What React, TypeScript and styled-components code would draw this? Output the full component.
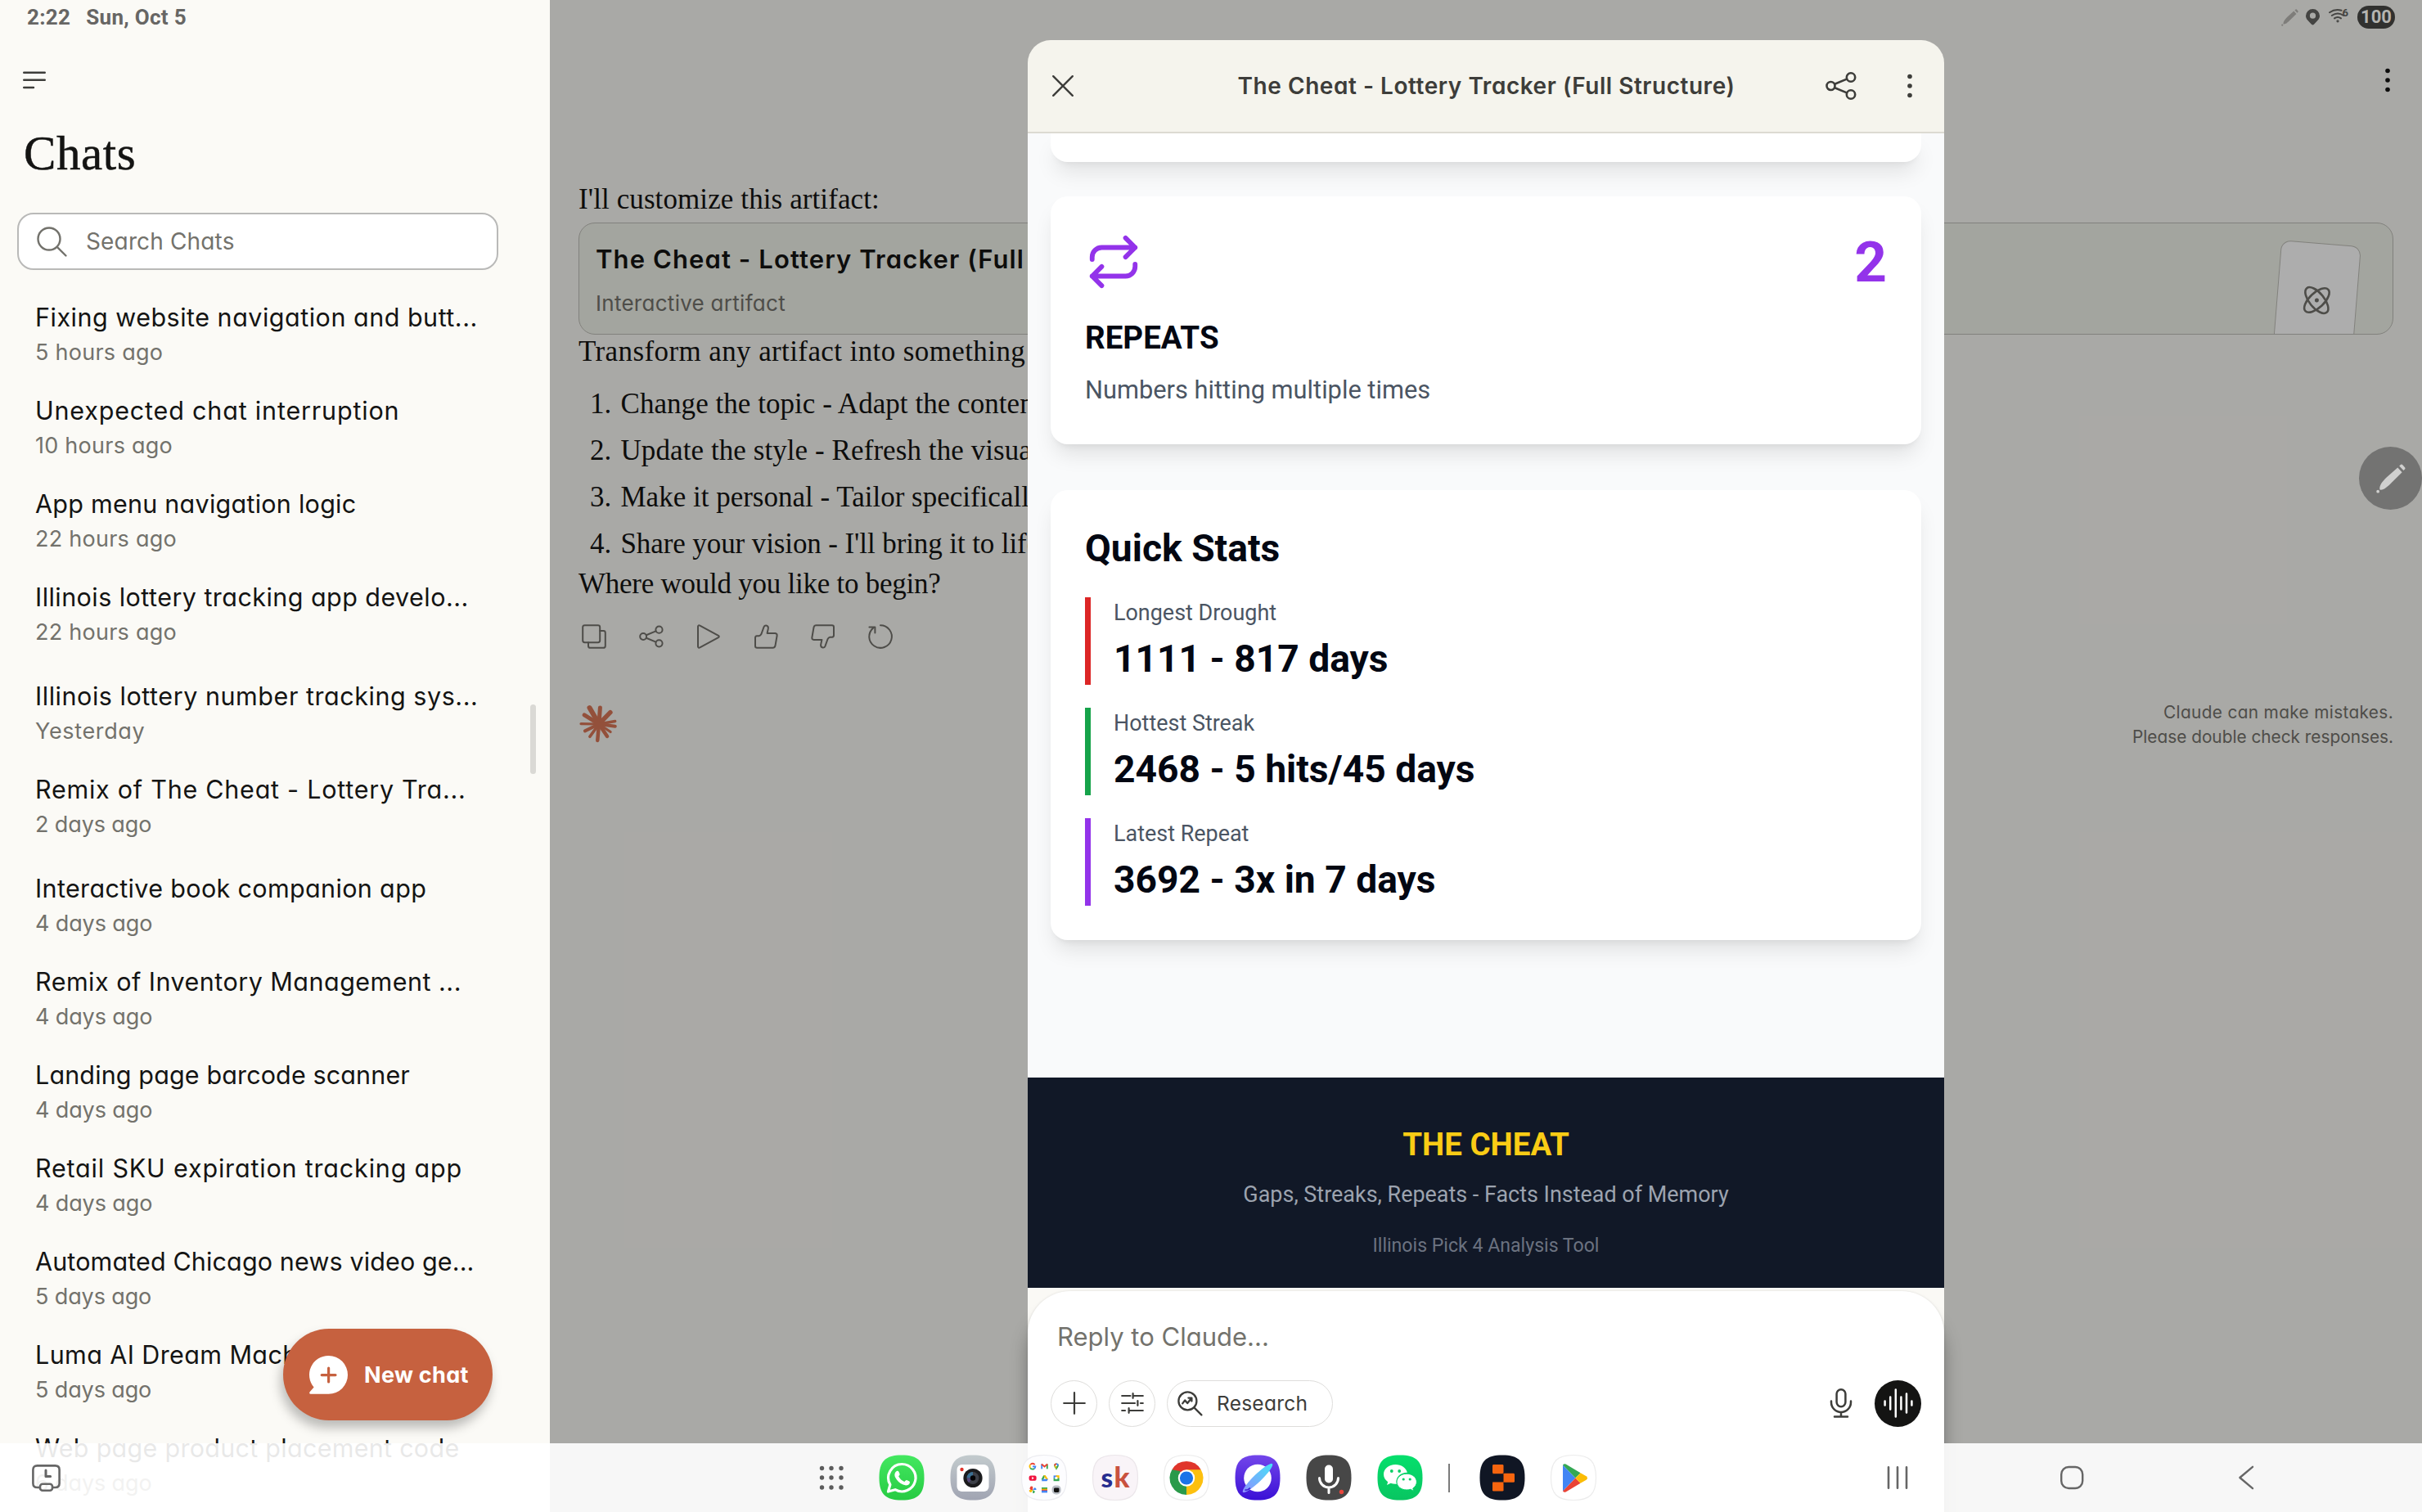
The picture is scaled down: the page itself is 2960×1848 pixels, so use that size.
import React from "react";
import styled, { createGlobalStyle } from "styled-components";

const sans = `Inter, "Liberation Sans", sans-serif`;
const serif = `"Liberation Serif", "Times New Roman", serif`;
const roboto = `Roboto, "Liberation Sans", sans-serif`;

const GlobalStyle = createGlobalStyle`
  * { box-sizing: border-box; }
  body { margin: 0; background: #faf9f5; overflow: hidden; }
  h1, h2, h3, p, ol, ul { margin: 0; padding: 0; font-weight: inherit; font-size: inherit; }
  ol, ul { list-style: none; }
  button { font: inherit; color: inherit; border: 0; background: none; padding: 0; }
  svg { display: block; flex: none; overflow: visible; }
`;

const Screen = styled.div`
  position: relative;
  display: grid;
  grid-template-columns: 672px 1fr;
  width: 2960px;
  height: 1848px;
  overflow: hidden;
  font-family: ${sans};
  font-feature-settings: "cv11";
  color: #141413;
  background: #faf9f5;
`;

/* ---------- system status bar ---------- */

const StatusBar = styled.header`
  position: absolute;
  inset: 0 0 auto 0;
  height: 42px;
  display: flex;
  justify-content: space-between;
  padding: 0 33px 0 33px;
  font-family: ${roboto};
`;

const Clock = styled.div`
  display: flex;
  gap: 19px;
  font-size: 26px;
  font-weight: 700;
  line-height: 42px;
  letter-spacing: 0.3px;
  color: #676664;
`;

const StatusIcons = styled.div`
  display: flex;
  align-items: center;
`;

const PenGlyph = styled.span`margin-right: 9px; color: #7e7d7a;`;
const PinGlyph = styled.svg`margin-right: 11px; color: #444442;`;
const WifiGlyph = styled.svg`margin-top: -4px; color: #444442;`;
const WifiGen = styled.span`
  font-size: 13px;
  font-weight: 700;
  line-height: 13px;
  margin: -12px 11px 0 -5px;
  color: #444442;
`;

const Battery = styled.span`
  width: 46px;
  height: 28px;
  border-radius: 14px;
  background: #31312f;
  color: #b5b4b0;
  font-size: 22px;
  font-weight: 700;
  line-height: 28px;
  text-align: center;
`;

/* ---------- sidebar ---------- */

const Sidebar = styled.aside`
  position: relative;
  display: flex;
  flex-direction: column;
  height: 1848px;
  overflow: hidden;
  background: #fbfaf6;
`;

const MenuButton = styled.button`
  width: 28px;
  margin: 87px 0 0 28px;
  color: #3d3d3a;
`;

const SidebarTitle = styled.h1`
  margin: 46px 0 0 29px;
  font-family: ${serif};
  font-size: 59px;
  line-height: 64px;
  letter-spacing: 0.6px;
  -webkit-text-stroke: 0.5px #141413;
`;

const SearchField = styled.div`
  display: flex;
  align-items: center;
  gap: 23px;
  width: 588px;
  height: 70px;
  flex: none;
  margin: 41px 0 0 21px;
  padding: 0 22px;
  border: 2px solid #b9b9b8;
  border-radius: 20px;
  background: #fff;
  color: #73726c;
  font-size: 28px;
  letter-spacing: 0.15px;
`;

const ChatGroups = styled.div`
  display: flex;
  flex-direction: column;
  gap: 7px;
  margin-top: 38px;
  padding-left: 43px;
`;

const ChatRow = styled.li`
  height: 114px;
`;

const ChatTitle = styled.p<{ $track: number }>`
  font-size: 30.5px;
  line-height: 40px;
  letter-spacing: ${(p) => p.$track}px;
  white-space: nowrap;
`;

const ChatMeta = styled.p<{ $track: number }>`
  margin-top: 3px;
  font-size: 27px;
  line-height: 40px;
  letter-spacing: ${(p) => p.$track}px;
  color: #73726c;
`;

const ScrollThumb = styled.div`
  position: absolute;
  right: 17px;
  top: 861px;
  width: 7px;
  height: 85px;
  border-radius: 4px;
  background: #dad9d5;
`;

const NewChatButton = styled.button`
  position: absolute;
  left: 346px;
  top: 1624px;
  display: flex;
  align-items: center;
  gap: 20px;
  width: 256px;
  height: 112px;
  padding-left: 32px;
  border-radius: 56px;
  background: #c6613f;
  color: #fff;
  font-size: 27px;
  font-weight: 700;
  letter-spacing: 0.3px;
  white-space: nowrap;
  box-shadow: -3px 9px 14px rgba(0, 0, 0, 0.26);
`;

/* ---------- conversation ---------- */

const Conversation = styled.main`
  position: relative;
  height: 1848px;
  padding: 223px 35px 0;
  background: #faf9f5;
  overflow: hidden;
`;

const TopMenu = styled.button`
  position: absolute;
  right: 39px;
  top: 83px;
`;

const Prose = styled.p<{ $track?: number }>`
  font-family: ${serif};
  font-size: 35px;
  line-height: 42px;
  letter-spacing: ${(p) => p.$track ?? 0}px;
  white-space: nowrap;
`;

const ArtifactCard = styled.section`
  position: relative;
  display: flex;
  flex-direction: column;
  height: 137px;
  margin-top: 7px;
  padding: 23px 20px 0;
  border: 1.5px solid #bfbfb8;
  border-radius: 20px;
  background: #f1f3ea;
  overflow: hidden;
`;

const ArtifactName = styled.h2`
  font-size: 31px;
  font-weight: 600;
  line-height: 42px;
  letter-spacing: 1.1px;
`;

const ArtifactKind = styled.p`
  margin-top: 13px;
  font-size: 26px;
  line-height: 40px;
  letter-spacing: 0.28px;
  color: #73726c;
`;

const ArtifactSheet = styled.div`
  position: absolute;
  right: 44px;
  top: 24px;
  width: 98px;
  height: 150px;
  display: flex;
  justify-content: center;
  padding-top: 51px;
  border: 1.5px solid #bfbfb8;
  border-radius: 12px;
  background: #fff;
  transform: rotate(4.6deg);
  color: #73726c;
`;

const Ideas = styled.ol`
  display: flex;
  flex-direction: column;
  gap: 15px;
  margin: 22px 0 7px;
  padding-left: 14px;
`;

const Idea = styled.li`
  display: grid;
  grid-template-columns: 37.5px 1fr;
`;

const Actions = styled.div`
  display: flex;
  gap: 40px;
  margin: 28px 0 63px 4px;
  color: #73726c;
`;

const Closing = styled.div`
  display: flex;
  justify-content: space-between;
`;

const Sparkle = styled.svg`margin-top: 5px;`;

const Disclaimer = styled.div`
  font-size: 20.8px;
  line-height: 30px;
  text-align: right;
  color: #73726c;
`;

const DisclaimerLine = styled.p<{ $track: number }>`
  letter-spacing: ${(p) => p.$track}px;
`;

const Scrim = styled.div`
  position: absolute;
  inset: 0;
  display: flex;
  justify-content: center;
  padding-top: 49px;
  background: rgba(0, 0, 0, 0.32);
`;

/* ---------- artifact sheet ---------- */

const Modal = styled.section`
  display: flex;
  flex-direction: column;
  width: 1120px;
`;

const ModalHeader = styled.header`
  display: grid;
  grid-template-columns: 1fr auto 1fr;
  align-items: center;
  height: 114px;
  padding: 0 39px 0 30px;
  border-bottom: 2px solid #dcdad2;
  border-radius: 28px 28px 0 0;
  background: #f5f4ed;
  color: #3d3d3a;
`;

const ModalTitle = styled.h2`
  margin-left: 10px;
  font-size: 28px;
  font-weight: 600;
  letter-spacing: 0.53px;
`;

const HeaderActions = styled.div`
  display: flex;
  justify-content: flex-end;
  align-items: center;
  gap: 62px;
`;

const Preview = styled.div`
  height: 1411px;
  overflow: hidden;
  display: flex;
  flex-direction: column;
  padding: 0 28px;
  background: #f9fafb;
  font-family: ${roboto};
  font-feature-settings: normal;
  color: #030712;
`;

const Card = styled.article<{ $space: number }>`
  flex: none;
  margin-bottom: ${(p) => p.$space}px;
  padding: 42px;
  border-radius: 21px;
  background: #fff;
  box-shadow: 0 17px 26px -5px rgba(0, 0, 0, 0.1), 0 7px 10px -7px rgba(0, 0, 0, 0.1);
`;

const CardTail = styled(Card)`
  height: 35px;
  padding: 0;
  border-radius: 0 0 21px 21px;
`;

const CardTop = styled.div`
  display: flex;
  justify-content: space-between;
  align-items: center;
  height: 76px;
  margin-bottom: 28px;
  color: #9333ea;
`;

const Count = styled.span`
  font-size: 69.3px;
  font-weight: 700;
`;

const CardTitle = styled.h3`
  font-size: 38.5px;
  font-weight: 700;
  line-height: 54px;
`;

const CardText = styled.p`
  margin-top: 14px;
  padding-bottom: 2px;
  font-size: 30.8px;
  line-height: 45px;
  color: #4b5563;
`;

const StatsTitle = styled.h3`
  margin-bottom: 31px;
  font-size: 46.2px;
  font-weight: 700;
  line-height: 58px;
`;

const StatList = styled.div`
  display: flex;
  flex-direction: column;
  gap: 28px;
`;

const Stat = styled.div<{ $accent: string }>`
  height: 107px;
  padding-left: 28px;
  border-left: 7px solid ${(p) => p.$accent};
`;

const StatLabel = styled.p`
  font-size: 26.95px;
  line-height: 38px;
  color: #4b5563;
`;

const StatValue = styled.p`
  margin-top: 7px;
  font-size: 46.2px;
  font-weight: 700;
  line-height: 60px;
`;

const Footer = styled.footer`
  margin: auto -28px 0;
  height: 257px;
  padding-top: 55px;
  background: #111827;
  text-align: center;
`;

const FooterTitle = styled.p`
  font-size: 38.5px;
  font-weight: 700;
  line-height: 54px;
  color: #facc15;
`;

const FooterTagline = styled.p`
  margin: 15px 0 28px;
  font-size: 26.95px;
  line-height: 38px;
  color: #9ca3af;
`;

const FooterNote = styled.p`
  font-size: 23.1px;
  line-height: 31px;
  color: #6b7280;
`;

const ComposerDock = styled.div`
  flex: 1;
  padding-top: 4px;
  background: linear-gradient(#faf9f5 0 60px, transparent 60px);
`;

const Composer = styled.div`
  height: 270px;
  padding: 36px 28px 0;
  border-radius: 52px 52px 0 0;
  background: #fff;
  box-shadow: 0 26px 22px rgba(0, 0, 0, 0.3), 0 0 3px rgba(0, 0, 0, 0.12);
`;

const Placeholder = styled.p`
  padding-left: 8px;
  font-size: 31px;
  line-height: 40px;
  color: #73726c;
`;

const Tools = styled.div`
  display: flex;
  align-items: center;
  gap: 14px;
  margin-top: 32.5px;
  color: #3d3d3a;
`;

const RoundButton = styled.button`
  display: grid;
  place-items: center;
  width: 57px;
  height: 57px;
  border: 1.5px solid #dedddb;
  border-radius: 50%;
`;

const VoiceButton = styled(RoundButton)`
  border: 0;
  background: #141413;
  color: #fff;
`;

const ResearchButton = styled.button`
  display: flex;
  align-items: center;
  gap: 17px;
  height: 57px;
  width: 203px;
  padding-left: 12px;
  border: 1.5px solid #dedddb;
  border-radius: 29px;
  font-size: 24.5px;
  letter-spacing: 0.25px;
`;

const MicSlot = styled.span`
  margin-left: auto;
  margin-right: 13px;
`;

/* ---------- edge pen handle ---------- */

const PenHandle = styled.button`
  position: absolute;
  right: 0;
  top: 546px;
  display: grid;
  place-items: center;
  width: 77px;
  height: 77px;
  border-radius: 50%;
  background: #737372;
  color: #d0d0cf;
`;

/* ---------- task bar ---------- */

const TaskBar = styled.nav`
  position: absolute;
  inset: auto 0 0 0;
  height: 84px;
  display: grid;
  grid-template-columns: 962px 1fr auto;
  align-items: center;
  padding: 0 200px 0 39px;
  background: rgba(255, 255, 255, 0.906);
  color: #666;
`;

const AppDock = styled.div`
  display: flex;
  align-items: center;
  gap: 31px;
`;

const DrawerButton = styled.button`
  margin-right: 12px;
`;

const Divider = styled.span`
  width: 2px;
  height: 35px;
  margin-right: 5px;
  background: #7b7b7b;
`;

const NavKeys = styled.div`
  display: flex;
  align-items: center;
  gap: 183px;
`;

type Chat = { title: string; when: string; track: number };

const chatGroups: Chat[][] = [
  [
    { title: "Fixing website navigation and butt...", when: "5 hours ago", track: 0.5 },
    { title: "Unexpected chat interruption", when: "10 hours ago", track: 0.82 },
    { title: "App menu navigation logic", when: "22 hours ago", track: 0.25 },
    { title: "Illinois lottery tracking app develo...", when: "22 hours ago", track: 0.45 },
  ],
  [
    { title: "Illinois lottery number tracking sys...", when: "Yesterday", track: 0.54 },
    { title: "Remix of The Cheat - Lottery Tra...", when: "2 days ago", track: 0.75 },
  ],
  [
    { title: "Interactive book companion app", when: "4 days ago", track: 0.35 },
    { title: "Remix of Inventory Management ...", when: "4 days ago", track: 0.48 },
    { title: "Landing page barcode scanner", when: "4 days ago", track: 0.13 },
    { title: "Retail SKU expiration tracking app", when: "4 days ago", track: 0.82 },
    { title: "Automated Chicago news video ge...", when: "5 days ago", track: 0.13 },
    { title: "Luma AI Dream Machine", when: "5 days ago", track: 0.4 },
    { title: "Web page product placement code", when: "6 days ago", track: 0.28 },
  ],
];

const metaTrack = (when: string) => (when.includes("days") ? -0.12 : when.includes("hours") ? 0.25 : 0.65);

const ideas = [
  { text: "Change the topic - Adapt the content", track: 0.05 },
  { text: "Update the style - Refresh the visual", track: 0.08 },
  { text: "Make it personal - Tailor specifically", track: 0 },
  { text: "Share your vision - I'll bring it to life", track: -0.1 },
];

const stats = [
  { label: "Longest Drought", value: "1111 - 817 days", accent: "#dc2626" },
  { label: "Hottest Streak", value: "2468 - 5 hits/45 days", accent: "#16a34a" },
  { label: "Latest Repeat", value: "3692 - 3x in 7 days", accent: "#9333ea" },
];

const line = { fill: "none", stroke: "currentColor", strokeLinecap: "round", strokeLinejoin: "round" } as const;

const Dots = () => (
  <svg width="6" height="30" viewBox="0 0 6 30" fill="currentColor">
    <circle cx="3" cy="3.5" r="2.8" /><circle cx="3" cy="15" r="2.8" /><circle cx="3" cy="26.5" r="2.8" />
  </svg>
);

const ShareIcon = ({ w, h, s }: { w: number; h: number; s: number }) => (
  <svg width={w} height={h} viewBox="0 0 38 34" {...line} strokeWidth={s}>
    <circle cx="6.5" cy="17" r="5" /><circle cx="31" cy="6.5" r="5.2" /><circle cx="31" cy="27.5" r="5.2" />
    <path d="M11.2 14.8 26 8.6M11.2 19.2 26 25.4" />
  </svg>
);

const PenIcon = ({ size }: { size: number }) => (
  <svg width={size} height={size} viewBox="0 0 37 37" fill="currentColor">
    <path d="M4.5 32.5C3.6 27 8 22 13 17L27 4.5 32.5 10.5 19 24C14 29 9.5 33.3 4.5 32.5Z" />
    <path d="M29 2.6 31 .8Q32 0 33 1L36.2 4.6Q37 5.6 36 6.6L34.4 8.2Z" />
    <circle cx="2.2" cy="34.6" r="1.9" />
  </svg>
);

const squircle = "M28 .5C8 .5.5 8 .5 28S8 55.5 28 55.5 55.5 48 55.5 28 48 .5 28 .5Z";

const AppIcon = ({ fill, stroke, children }: { fill: string; stroke?: string; children?: React.ReactNode }) => (
  <svg width="56" height="56" viewBox="0 0 56 56">
    <path d={squircle} fill={fill} stroke={stroke ?? "none"} strokeWidth="1.2" />
    {children}
  </svg>
);

const GradientDefs = styled.svg`position: absolute;`;

const Gradients = () => (
  <GradientDefs width="0" height="0">
    <defs>
      <linearGradient id="wa" x2="0" y2="1"><stop stopColor="#43e860" /><stop offset="1" stopColor="#27cb43" /></linearGradient>
      <linearGradient id="cam" x2="0" y2="1"><stop stopColor="#c3cbcd" /><stop offset="1" stopColor="#a0a4b2" /></linearGradient>
      <linearGradient id="net" x2="0" y2="1"><stop stopColor="#7346ea" /><stop offset="1" stopColor="#3a10d6" /></linearGradient>
      <linearGradient id="ring" x1="0" x2="1"><stop stopColor="#8f90ff" /><stop offset="1" stopColor="#45e2f7" /></linearGradient>
      <linearGradient id="wc" x2="0" y2="1"><stop stopColor="#05df6c" /><stop offset="1" stopColor="#08c561" /></linearGradient>
    </defs>
  </GradientDefs>
);

const MiniApps = () => (
  <g>
    <g fill="none" strokeWidth="1.8">
      <path d="M16.6 12.2A3.2 3.2 0 0 0 11.4 12" stroke="#ea4335" />
      <path d="M11.2 12A3.6 3.6 0 0 0 11.2 16.2" stroke="#fbbc04" />
      <path d="M11.2 16.2A3.4 3.4 0 0 0 16 17" stroke="#34a853" />
      <path d="M14 14.3H17.4Q17.4 16 16 17" stroke="#4285f4" />
    </g>
    <path d="M25.2 17.3V11.5" stroke="#4285f4" strokeWidth="1.9" />
    <path d="M31.8 17.3V11.5" stroke="#34a853" strokeWidth="1.9" />
    <path d="M24.9 11.4 28.5 14.4 32.1 11.4" stroke="#ea4335" strokeWidth="2" fill="none" />
    <path d="M43 19C42.6 16.6 40.2 15.6 40.2 13.2A2.8 2.8 0 0 1 45.8 13.2C45.8 15.6 43.4 16.6 43 19Z" fill="#34a853" />
    <path d="M40.2 13.2A2.8 2.8 0 0 1 43 10.4V13.2Z" fill="#ea4335" />
    <path d="M43 10.4A2.8 2.8 0 0 1 45.8 13.2H43Z" fill="#4285f4" />
    <path d="M40.2 13.4H43V17.5Z" fill="#fbbc04" />
    <circle cx="43" cy="13.2" r="1" fill="#fff" />
    <rect x="9.6" y="25.4" width="9" height="6.4" rx="2" fill="#f1123f" />
    <path d="M13.2 27 15.8 28.6 13.2 30.2Z" fill="#fff" />
    <path d="M27.2 25.2H29.8L26.2 32 24.8 29.8Z" fill="#34a853" />
    <path d="M27.2 25.2H29.8L33 30H30.4Z" fill="#fbbc04" />
    <path d="M26 29.8H33L31.4 32.2H25Z" fill="#4285f4" />
    <rect x="39.6" y="25.4" width="4" height="3.4" fill="#4285f4" />
    <rect x="42.6" y="25.2" width="4" height="3.6" fill="#fbbc04" />
    <rect x="39.6" y="28.6" width="7" height="3.6" fill="#34a853" />
    <rect x="41.4" y="27" width="3" height="3" fill="#fff" />
    <path d="M14.2 39V43H11.6A2 2 0 0 1 14.2 39Z" fill="#ea4335" />
    <path d="M14.2 43H18.4A2 2 0 0 0 16 40.4Z" fill="#4285f4" />
    <path d="M14.2 43V47A2 2 0 0 0 16.6 44.4Z" fill="#34a853" />
    <path d="M14.2 43H10A2 2 0 0 0 12.6 45.8Z" fill="#fbbc04" />
    <rect x="25" y="40" width="7" height="2" fill="#34a853" />
    <rect x="25" y="41.6" width="7" height="1.6" fill="#fbbc04" />
    <rect x="25" y="42.8" width="7" height="1.4" fill="#ea4335" />
    <rect x="25" y="43.8" width="7" height="2.6" fill="#4285f4" />
    <rect x="37.6" y="37.4" width="11" height="11" rx="4.6" fill="#b8bdc4" />
    <rect x="40" y="40.4" width="6.4" height="5.6" rx="1.4" fill="#111" />
  </g>
);

const Dock = () => (
  <AppDock>
    <DrawerButton aria-label="Apps">
      <svg width="30" height="30" viewBox="0 0 30 30" fill="#5c5c5c">
        {[3.5, 15, 27].map((y) => [3.5, 15, 27].map((x) => <circle key={`${x}-${y}`} cx={x} cy={y} r="2.7" />))}
      </svg>
    </DrawerButton>
    <AppIcon fill="url(#wa)">
      <path d="M28.2 11.5A16.7 16.7 0 1 1 20 42.7L11.5 45 13.9 36.6A16.7 16.7 0 0 1 28.2 11.5Z" fill="none" stroke="#fff" strokeWidth="3.2" strokeLinejoin="round" />
      <path d="M21.8 20C23 19.3 24 19.8 24.4 20.8L25.6 23.6C26 24.8 24.4 25.8 24.2 26.6 25.8 29.6 28.2 31.8 31.2 33 32.2 32.6 33 30.8 34.2 31L37.4 32.6C38.4 33.2 38 35.2 36.8 36.2 34.8 37.8 32 37.6 29.6 36.6 25.4 34.8 22.2 31.6 20.2 27.8 18.8 25 19.2 21.6 21.8 20Z" fill="#fff" />
    </AppIcon>
    <AppIcon fill="url(#cam)">
      <rect x="8.5" y="12" width="39" height="33" rx="6" fill="#fff" />
      <circle cx="14.5" cy="18" r="2.2" fill="#e0342b" />
      <circle cx="28" cy="28.5" r="11.6" fill="#1b1b1d" />
      <circle cx="28" cy="28.5" r="7.4" fill="#3d4048" />
      <path d="M28 21.1A7.4 7.4 0 0 0 20.6 28.5L28 28.5Z" fill="#3b6f93" />
      <path d="M20.6 28.5A7.4 7.4 0 0 0 23 34L28 28.5Z" fill="#56487a" />
      <circle cx="28" cy="28.5" r="3.2" fill="#050507" />
    </AppIcon>
    <AppIcon fill="#fdfdff" stroke="#ececf0"><MiniApps /></AppIcon>
    <AppIcon fill="#f9f4f8" stroke="#ebe6ea">
      <text x="10.4" y="40" fontFamily="Lato, Roboto, sans-serif" fontWeight="900" fontSize="33" fill="#272d8f">s</text>
      <text x="26.4" y="40" fontFamily="Lato, Roboto, sans-serif" fontWeight="900" fontSize="35" fill="#c9523f">k</text>
    </AppIcon>
    <AppIcon fill="#fff" stroke="#ececec">
      <path d="M28 28.5 10.3 18.3A20.4 20.4 0 0 1 45.7 18.3Z" fill="#e0352b" />
      <path d="M28 28.5 45.7 18.3A20.4 20.4 0 0 1 28 48.9Z" fill="#fdc00f" />
      <path d="M28 28.5 28 48.9A20.4 20.4 0 0 1 10.3 18.3Z" fill="#2a9a4a" />
      <path d="M28 18.3H45.7L36.8 33.6 28 48.9 36 32Z" fill="#fdc00f" />
      <path d="M10.3 18.3 19.2 33.6 24 30 20 20Z" fill="#2a9a4a" />
      <circle cx="28" cy="28.5" r="10.2" fill="#fff" />
      <circle cx="28" cy="28.5" r="8.1" fill="#1a73e8" />
    </AppIcon>
    <AppIcon fill="url(#net)">
      <circle cx="28" cy="28.5" r="16.8" fill="#fff" />
      <ellipse cx="28" cy="28.5" rx="25" ry="4.8" transform="rotate(-44 28 28.5)" fill="url(#ring)" />
      <path d="M12.4 43Q15.6 43.6 19 40.6" stroke="#3f1fd8" strokeWidth="1.6" fill="none" />
    </AppIcon>
    <AppIcon fill="#474747">
      <rect x="23" y="12.5" width="10" height="22" rx="5" fill="#fff" />
      <path d="M16.5 28.5A11.5 11.5 0 0 0 39.5 28.5M28 40.5V46.5" {...line} stroke="#fff" strokeWidth="3" />
      <circle cx="43.5" cy="45.5" r="2.7" fill="#e8453c" />
    </AppIcon>
    <AppIcon fill="url(#wc)">
      <path d="M22.5 12C14.2 12 8 17.4 8 24 8 27.8 10 31 13.2 33.2L12 37 16.6 34.8C18.4 35.4 20.4 35.8 22.5 35.8 23 35.8 23.6 35.8 24 35.7 21.8 28.4 28 21.6 36.9 21.8 35.6 16.2 29.6 12 22.5 12Z" fill="#fff" />
      <path d="M36.2 23.2C29.2 23.2 24 27.8 24 33.2S29.2 43 36.2 43C37.8 43 39.4 42.8 40.8 42.3L44.8 44.4 43.8 41C46.6 39.2 48.4 36.4 48.4 33.2 48.4 27.8 43.2 23.2 36.2 23.2Z" fill="#fff" stroke="#07d068" strokeWidth="1" />
      <circle cx="17.8" cy="20" r="1.9" fill="#07cf65" /><circle cx="27.2" cy="20" r="1.9" fill="#07cf65" />
      <circle cx="32.2" cy="30" r="1.6" fill="#07cf65" /><circle cx="40.2" cy="30" r="1.6" fill="#07cf65" />
    </AppIcon>
    <Divider />
    <AppIcon fill="#101624">
      <g fill="#f6650f">
        <rect x="16" y="12" width="13.5" height="11" rx="1.4" />
        <rect x="29.5" y="22.8" width="13.5" height="11" rx="1.4" />
        <rect x="16" y="22.8" width="14" height="11" />
        <rect x="16" y="33.6" width="13.5" height="11" rx="1.4" />
      </g>
      <rect x="15.5" y="23.2" width="14" height="10.2" fill="#101624" />
    </AppIcon>
    <AppIcon fill="#fff" stroke="#ececec">
      <path d="M15 12.4V44.6L30.4 28.5Z" fill="#4285f4" />
      <path d="M15 12.4Q16.6 10.4 18.6 11.6L36.6 22.2 30.4 28.5Z" fill="#34a853" />
      <path d="M15 44.6Q16.6 46.6 18.6 45.4L36.6 34.8 30.4 28.5Z" fill="#ea4335" />
      <path d="M36.6 22.2 43.6 26.2Q46.4 28.5 43.6 30.8L36.6 34.8 30.4 28.5Z" fill="#fbbc04" />
    </AppIcon>
  </AppDock>
);

const rays: [number, number, number][] = [
  [-120, 26, 6], [-86, 23, 5], [-46, 23, 5.5], [-10, 23, 3.5], [8, 23, 4], [34, 20, 3.2],
  [56, 21, 4.5], [95, 23, 4.5], [126, 22, 3.5], [154, 22, 4], [181, 25, 3.2], [-148, 24, 5],
];

export default function App() {
  return (
    <Screen>
      <GlobalStyle />
      <Gradients />

      <Sidebar>
        <MenuButton aria-label="Menu">
          <svg width="28" height="22" viewBox="0 0 28 22" {...line} strokeWidth="2.4">
            <path d="M1.2 1.8H26.8M1.2 10.8H26.8M1.2 20H13" />
          </svg>
        </MenuButton>
        <SidebarTitle>Chats</SidebarTitle>
        <SearchField>
          <svg width="37" height="37" viewBox="0 0 37 37" {...line} strokeWidth="2.4">
            <circle cx="15" cy="15" r="13.5" /><path d="M24.8 24.8 35.5 35.5" />
          </svg>
          Search Chats
        </SearchField>
        <ChatGroups>
          {chatGroups.map((group, i) => (
            <ul key={i}>
              {group.map((chat) => (
                <ChatRow key={chat.title}>
                  <ChatTitle $track={chat.track}>{chat.title}</ChatTitle>
                  <ChatMeta $track={metaTrack(chat.when)}>{chat.when}</ChatMeta>
                </ChatRow>
              ))}
            </ul>
          ))}
        </ChatGroups>
        <ScrollThumb />
        <NewChatButton>
          <svg width="47" height="47" viewBox="0 0 47 47">
            <path d="M23.6 0A23.4 23.4 0 0 1 23.6 46.8H1.6C.2 46.8-.2 45.2.6 44.2L5.6 38.6A23.4 23.4 0 0 1 23.6 0Z" fill="#fff" />
            <path d="M23.6 15.2V32M15.2 23.6H32" stroke="#c6613f" strokeWidth="3.2" strokeLinecap="round" />
          </svg>
          New chat
        </NewChatButton>
      </Sidebar>

      <Conversation>
        <TopMenu aria-label="More"><Dots /></TopMenu>
        <Prose $track={0.1}>I'll customize this artifact:</Prose>
        <ArtifactCard>
          <ArtifactName>The Cheat - Lottery Tracker (Full Structure)</ArtifactName>
          <ArtifactKind>Interactive artifact</ArtifactKind>
          <ArtifactSheet>
            <svg width="36" height="36" viewBox="0 0 36 36" {...line} strokeWidth="2.6">
              <ellipse cx="18" cy="18" rx="19.2" ry="9" transform="rotate(-48 18 18)" />
              <ellipse cx="18" cy="18" rx="19.2" ry="9" transform="rotate(46 18 18)" />
              <circle cx="18" cy="18" r="1.2" fill="currentColor" />
            </svg>
          </ArtifactSheet>
        </ArtifactCard>
        <Prose $track={0.4}>Transform any artifact into something</Prose>
        <Ideas>
          {ideas.map((idea, i) => (
            <Idea key={idea.text}>
              <Prose>{i + 1}.</Prose>
              <Prose $track={idea.track}>{idea.text}</Prose>
            </Idea>
          ))}
        </Ideas>
        <Prose $track={-0.25}>Where would you like to begin?</Prose>
        <Actions>
          <svg width="30" height="30" viewBox="0 0 30 30" {...line} strokeWidth="2">
            <rect x="1.2" y="1.2" width="21" height="21" rx="2.4" />
            <path d="M22.2 8H26.4Q28.8 8 28.8 10.4V26.4Q28.8 28.8 26.4 28.8H10.4Q8 28.8 8 26.4V22.2" />
          </svg>
          <ShareIcon w={30} h={30} s={2.5} />
          <svg width="30" height="30" viewBox="0 0 30 30" {...line} strokeWidth="2">
            <path d="M2 2.6V27.4Q2.4 29.2 4.4 28.4L27 16.2Q28.6 15 27 13.8L4.4 1.6Q2.4.8 2 2.6Z" />
          </svg>
          <svg width="30" height="30" viewBox="0 0 30 30" {...line} strokeWidth="2">
            <path d="M2 16.4Q2 14.4 4 14.2H6.6Q8.4 13.8 9.4 12L12.6 3.2Q13.4 1.2 15.4 1.4 18.4 2.2 17.8 5.4L16.6 11H26.4Q29 11.4 28.6 14L26.4 26.6Q25.8 28.8 23.6 28.8H4.2Q2 28.8 2 26.6Z" />
          </svg>
          <svg width="30" height="30" viewBox="0 0 30 30" {...line} strokeWidth="2">
            <path d="M28 13.6Q28 15.6 26 15.8H23.4Q21.6 16.2 20.6 18L17.4 26.8Q16.6 28.8 14.6 28.6 11.6 27.8 12.2 24.6L13.4 19H3.6Q1 18.6 1.4 16L3.6 3.4Q4.2 1.2 6.4 1.2H25.8Q28 1.2 28 3.4Z" />
          </svg>
          <svg width="30" height="30" viewBox="0 0 30 30" {...line} strokeWidth="2">
            <path d="M15 1.2A13.8 13.8 0 1 1 6.2 4.4Q1.8 8.4 1.4 13.6M1.4 3.4H8.4V10.6" />
          </svg>
        </Actions>
        <Closing>
          <Sparkle width="48" height="48" viewBox="-25 -24 48 48">
            {rays.map(([angle, length, width]) => (
              <path key={angle} d={`M0 0H${length - 3}`} stroke="#d97757" strokeWidth={width} strokeLinecap="round" transform={`rotate(${angle})`} />
            ))}
          </Sparkle>
          <Disclaimer>
            <DisclaimerLine $track={0.35}>Claude can make mistakes.</DisclaimerLine>
            <DisclaimerLine $track={0}>Please double check responses.</DisclaimerLine>
          </Disclaimer>
        </Closing>

        <Scrim>
          <Modal>
            <ModalHeader>
              <svg width="26" height="26" viewBox="0 0 26 26" {...line} strokeWidth="2.4"><path d="M1.2 1.2 24.8 24.8M24.8 1.2 1.2 24.8" /></svg>
              <ModalTitle>The Cheat - Lottery Tracker (Full Structure)</ModalTitle>
              <HeaderActions><ShareIcon w={38} h={34} s={2.6} /><Dots /></HeaderActions>
            </ModalHeader>
            <Preview>
              <CardTail $space={42} />
              <Card $space={56}>
                <CardTop>
                  <svg width="70" height="70" viewBox="0 0 24 24" {...line} strokeWidth="2">
                    <path d="m17 2 4 4-4 4M3 11v-1a4 4 0 0 1 4-4h14M7 22l-4-4 4-4M21 13v1a4 4 0 0 1-4 4H3" />
                  </svg>
                  <Count>2</Count>
                </CardTop>
                <CardTitle>REPEATS</CardTitle>
                <CardText>Numbers hitting multiple times</CardText>
              </Card>
              <Card $space={0}>
                <StatsTitle>Quick Stats</StatsTitle>
                <StatList>
                  {stats.map((stat) => (
                    <Stat key={stat.label} $accent={stat.accent}>
                      <StatLabel>{stat.label}</StatLabel>
                      <StatValue>{stat.value}</StatValue>
                    </Stat>
                  ))}
                </StatList>
              </Card>
              <Footer>
                <FooterTitle>THE CHEAT</FooterTitle>
                <FooterTagline>Gaps, Streaks, Repeats - Facts Instead of Memory</FooterTagline>
                <FooterNote>Illinois Pick 4 Analysis Tool</FooterNote>
              </Footer>
            </Preview>
            <ComposerDock>
              <Composer>
                <Placeholder>Reply to Claude...</Placeholder>
                <Tools>
                  <RoundButton aria-label="Add">
                    <svg width="28" height="28" viewBox="0 0 28 28" {...line} strokeWidth="2.2"><path d="M14 1.2V26.8M1.2 14H26.8" /></svg>
                  </RoundButton>
                  <RoundButton aria-label="Settings">
                    <svg width="28" height="26" viewBox="0 0 28 26" {...line} strokeWidth="2.2">
                      <path d="M1.2 4H11.5M14.6 1.2V6.8M14.6 4H26.8M1.2 13H17M20.4 10.2V15.8M24 13H26.8M1.2 22H5M9.6 19.2V24.8M9.6 22H26.8" />
                    </svg>
                  </RoundButton>
                  <ResearchButton>
                    <svg width="31" height="31" viewBox="0 0 31 31" {...line} strokeWidth="2.3">
                      <circle cx="12.4" cy="12.4" r="11" /><path d="M20.4 20.4 29.4 29.4M6.2 15.4 9.2 11.4 12.2 15 17.2 8.8M13.4 8.6H17.4V12.6" />
                    </svg>
                    Research
                  </ResearchButton>
                  <MicSlot>
                    <svg width="28" height="36" viewBox="0 0 28 36" {...line} strokeWidth="2.5">
                      <rect x="8.6" y="1.2" width="10.8" height="21" rx="5.4" />
                      <path d="M2 15.5V17A12 12 0 0 0 26 17V15.5M14 29V34.4M6 34.6H22" />
                    </svg>
                  </MicSlot>
                  <VoiceButton aria-label="Voice">
                    <svg width="36" height="36" viewBox="0 0 36 36" {...line} strokeWidth="2.5">
                      <path d="M1.6 15.6V20.4M8.2 10.6V25.4M14.8 1.4V34.6M21.4 10.6V25.4M28 6.4V29.6M34.4 15.6V20.4" />
                    </svg>
                  </VoiceButton>
                </Tools>
              </Composer>
            </ComposerDock>
          </Modal>
        </Scrim>
      </Conversation>

      <PenHandle aria-label="Pen"><PenIcon size={36} /></PenHandle>

      <StatusBar>
        <Clock><span>2:22</span><span>Sun, Oct 5</span></Clock>
        <StatusIcons>
          <PenGlyph><PenIcon size={21} /></PenGlyph>
          <PinGlyph width="17" height="20" viewBox="0 0 17 20" fill="currentColor">
            <path fillRule="evenodd" d="M8.5 0A8.4 8.4 0 0 1 17 8.4C17 12.6 13 15 10 18.8Q8.5 20.4 7 18.8C4 15 0 12.6 0 8.4A8.4 8.4 0 0 1 8.5 0ZM8.5 4.6A3.6 3.6 0 1 0 8.5 11.8 3.6 3.6 0 0 0 8.5 4.6Z" />
          </PinGlyph>
          <WifiGlyph width="22" height="16" viewBox="0 0 22 16" {...line} strokeWidth="2">
            <path d="M1 4.2Q8-.6 15.6 1.8M3.8 8Q11 3 18.2 8M7 11.4Q11 8.6 15 11.4" /><circle cx="11" cy="14.8" r=".6" />
          </WifiGlyph>
          <WifiGen>6</WifiGen>
          <Battery>100</Battery>
        </StatusIcons>
      </StatusBar>

      <TaskBar>
        <svg width="35" height="33" viewBox="0 0 35 33" {...line} strokeWidth="2.6">
          <path d="M9.5 28H6.5Q1.4 28 1.4 23V6.4Q1.4 1.4 6.5 1.4H28.5Q33.6 1.4 33.6 6.4V23Q33.6 28 28.5 28H25.5" />
          <rect x="10" y="23.8" width="15" height="8" rx="3" />
          <path d="M17 7V14.4H22.6" strokeWidth="3" />
        </svg>
        <Dock />
        <NavKeys>
          <svg width="30" height="28" viewBox="0 0 30 28" {...line} strokeWidth="2.6"><path d="M4 1.3V26.7M15 1.3V26.7M26 1.3V26.7" /></svg>
          <svg width="30" height="30" viewBox="0 0 30 30" {...line} strokeWidth="2.4"><rect x="2.2" y="2" width="26" height="26" rx="9" /></svg>
          <svg width="30" height="30" viewBox="0 0 30 30" {...line} strokeWidth="2.4"><path d="M23 1.8 7.4 15 23 28.2" /></svg>
        </NavKeys>
      </TaskBar>
    </Screen>
  );
}
